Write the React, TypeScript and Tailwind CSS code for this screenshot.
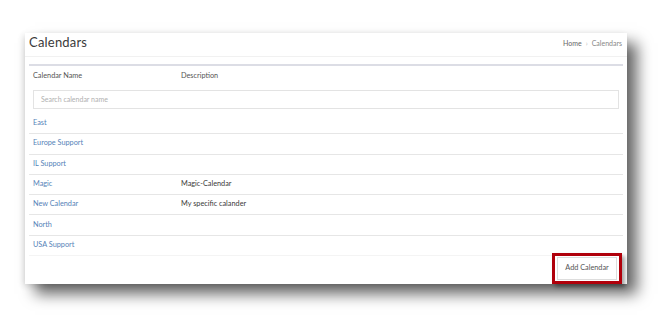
const rows = [
  { name: "East", desc: "" },
  { name: "Europe Support", desc: "" },
  { name: "IL Support", desc: "" },
  { name: "Magic", desc: "Magic-Calendar" },
  { name: "New Calendar", desc: "My specific calander" },
  { name: "North", desc: "" },
  { name: "USA Support", desc: "" },
];

export default function App() {
  return (
    <div className="w-[663px] h-[324px] bg-white pt-[33px] pl-[25px] font-['Lato',sans-serif] overflow-hidden">
      {/* Card */}
      <div className="w-[602px] bg-white flex flex-col shadow-[10px_10px_14px_rgba(0,0,0,0.6),-2px_2px_6px_rgba(0,0,0,0.12)]">
        {/* Header */}
        <div className="h-[24px] shrink-0 flex items-start justify-between px-[4px] border-b border-[#f1f1f1]">
          <h1 className="text-[13px] leading-[16px] mt-[1px] text-[#3a3a3a] tracking-[0.2px]">Calendars</h1>
          <div className="text-[7px] mt-[5px] pr-[1px] text-[#666] flex gap-[4px]">
            <span>Home</span>
            <span className="text-[#bbb]">›</span>
            <span className="text-[#888]">Calendars</span>
          </div>
        </div>

        {/* Table */}
        <div className="mx-[4px] mt-[7px] border-t-2 border-[#dcdde5]">
          <div className="flex h-[21px] items-center text-[7.3px] text-[#555] px-[4px]">
            <span className="w-[148px]">Calendar Name</span>
            <span>Description</span>
          </div>
          <div className="px-[4px] pt-[3px] pb-[5px]">
            <div className="h-[19px] border border-[#e3e3e3] flex items-center px-[7px] text-[7px] text-[#b0b0b0]">
              Search calendar name
            </div>
          </div>
          {rows.map((r) => (
            <div
              key={r.name}
              className="flex h-[20.3px] items-center text-[7.3px] px-[4px] border-b border-[#e6e6e6] last:border-[#f4f4f4]"
            >
              <span className="w-[148px] text-[#5683b8]">{r.name}</span>
              <span className="text-[#3a3a3a]">{r.desc}</span>
            </div>
          ))}
        </div>

        {/* Footer */}
        <div className="flex justify-end pr-[5px] mt-[-3px]">
          <div className="flex border-[3px] border-[#b0000b] shadow-[3px_3px_4px_rgba(0,0,0,0.35)] px-[2px] py-[1px]">
            <button className="h-[23px] w-[60px] text-[7.3px] text-[#555] bg-white border border-[#ddd]">
              Add Calendar
            </button>
          </div>
        </div>
      </div>
    </div>
  );
}
